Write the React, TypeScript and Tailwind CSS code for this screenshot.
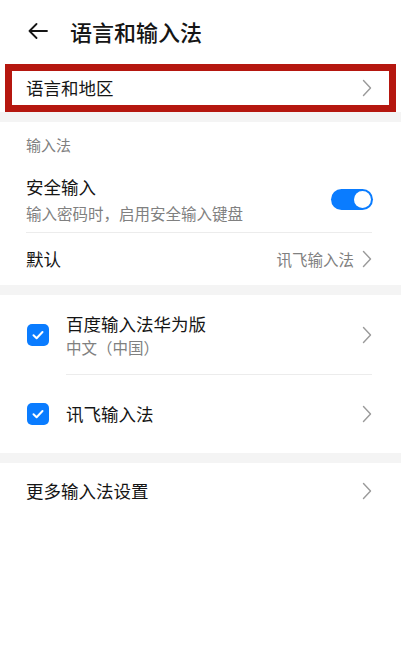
import React from "react";

const font = { fontFamily: '"Noto Sans CJK SC", "Noto Sans", sans-serif' };

function Chevron() {
  return (
    <svg width="10" height="18" viewBox="0 0 10 18" fill="none" className="shrink-0">
      <path d="M1.5 1.5 L8.5 9 L1.5 16.5" stroke="#9a9a9a" strokeWidth="1.4" strokeLinecap="round" strokeLinejoin="round" />
    </svg>
  );
}

function Check() {
  return (
    <div className="w-[22px] h-[22px] rounded-[5px] bg-[#0a7cff] flex items-center justify-center shrink-0">
      <svg width="14" height="14" viewBox="0 0 14 14" fill="none">
        <path d="M2.5 7.2 L5.6 10.2 L11.5 4" stroke="white" strokeWidth="2" strokeLinecap="round" strokeLinejoin="round" />
      </svg>
    </div>
  );
}

export default function App() {
  return (
    <div className="w-[401px] h-[656px] bg-white text-[#151515] overflow-hidden" style={font}>
      {/* Header */}
      <div className="h-[64px] flex items-center pl-[28px] pb-[3px]">
        <svg width="20" height="16" viewBox="0 0 20 16" fill="none">
          <path d="M19 8 H1.5 M8.5 1 L1.5 8 L8.5 15" stroke="#151515" strokeWidth="1.8" strokeLinecap="round" strokeLinejoin="round" />
        </svg>
        <div className="ml-[22px] text-[22px] leading-[30px] font-medium">语言和输入法</div>
      </div>

      {/* Language & region row (highlighted) */}
      <div className="mx-[5px] h-[48px] border-[7px] border-[#b5170f] flex items-center justify-between pl-[14px] pr-[17px]">
        <span className="text-[17.5px] leading-[24px]">语言和地区</span>
        <Chevron />
      </div>

      <div className="h-[10px] bg-[#f4f4f4]" />

      {/* Section header */}
      <div className="pl-[26px] pt-[13px] text-[15px] leading-[20px] text-[#808080]">输入法</div>

      <div className="pl-[26px] pr-[29px]">
        {/* Secure input */}
        <div className="flex items-center justify-between pt-[20px] pb-[9px] border-b border-[#ececec]">
          <div className="flex flex-col gap-[4px]">
            <span className="text-[17.5px] leading-[24px]">安全输入</span>
            <span className="text-[15.5px] leading-[20px] text-[#808080]">输入密码时，启用安全输入键盘</span>
          </div>
          <div className="w-[42px] h-[21px] rounded-full bg-[#0a7cff] flex items-center justify-end pr-[2px] mr-[-1px]">
            <div className="w-[17px] h-[17px] rounded-full bg-white" />
          </div>
        </div>

        {/* Default */}
        <div className="h-[52px] flex items-center justify-between">
          <span className="text-[17.5px] leading-[24px]">默认</span>
          <div className="flex items-center gap-[8px]">
            <span className="text-[15.5px] leading-[20px] text-[#808080]">讯飞输入法</span>
            <Chevron />
          </div>
        </div>
      </div>

      <div className="h-[10px] bg-[#f4f4f4]" />

      {/* Input methods list */}
      <div className="pl-[27px] pr-[29px]">
        <div className="flex items-center gap-[17px]">
          <Check />
          <div className="flex-1 flex items-center justify-between h-[80px] border-b border-[#ececec]">
            <div className="flex flex-col">
              <span className="text-[17.5px] leading-[24px]">百度输入法华为版</span>
              <span className="text-[15.5px] leading-[22px] text-[#808080]">中文（中国）</span>
            </div>
            <Chevron />
          </div>
        </div>
        <div className="flex items-center gap-[17px]">
          <Check />
          <div className="flex-1 flex items-center justify-between h-[78px]">
            <span className="text-[17.5px] leading-[24px]">讯飞输入法</span>
            <Chevron />
          </div>
        </div>
      </div>

      <div className="h-[10px] bg-[#f4f4f4]" />

      <div className="pl-[26px] pr-[29px] h-[56px] flex items-center justify-between">
        <span className="text-[17.5px] leading-[24px]">更多输入法设置</span>
        <Chevron />
      </div>
    </div>
  );
}
